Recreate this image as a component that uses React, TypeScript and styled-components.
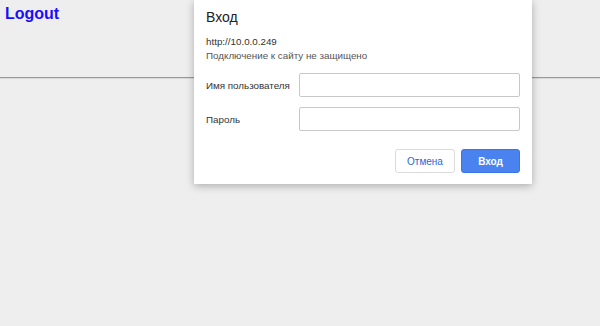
import React from 'react';
import styled, { createGlobalStyle } from 'styled-components';

const GlobalStyle = createGlobalStyle`
  html, body {
    margin: 0;
    padding: 0;
    background: #eeeeee;
    height: 100%;
  }
  #root {
    position: relative;
    min-height: 326px;
  }
`;

const Page = styled.div`
  padding: 4px 0 0 5px;
`;

const LogoutLink = styled.a`
  display: inline-block;
  font-family: 'Liberation Sans', Arial, sans-serif;
  font-weight: bold;
  font-size: 16px;
  color: #1a0dff;
  text-decoration: none;
  line-height: 20px;
`;

const Rule = styled.hr`
  margin: 53px 0 0 0;
  border: 0;
  border-top: 1px solid #9a9a9a;
  border-bottom: 1px solid #d8d8d8;
  height: 0;
`;

const Dialog = styled.div`
  position: absolute;
  top: 0;
  left: 194px;
  width: 338px;
  box-sizing: border-box;
  padding: 9px 12px 11px 12px;
  background: #ffffff;
  box-shadow: 0 2px 8px rgba(0, 0, 0, 0.28);
  font-family: 'Liberation Sans', Arial, sans-serif;
  color: #333;
`;

const Title = styled.div`
  font-size: 14px;
  line-height: 17px;
  color: #222;
`;

const Url = styled.div`
  margin-top: 9px;
  font-size: 9.8px;
  line-height: 14px;
  color: #333;
`;

const Note = styled.div`
  font-size: 9.8px;
  line-height: 14px;
  color: #555;
`;

const Fields = styled.div`
  display: flex;
  flex-direction: column;
  gap: 10px;
  margin-top: 10px;
`;

const Row = styled.label`
  display: flex;
  align-items: center;
  justify-content: space-between;
  font-size: 9.8px;
  white-space: nowrap;
  color: #333;
`;

const Input = styled.input`
  flex: 0 0 221px;
  width: 221px;
  height: 24px;
  margin: 0;
  box-sizing: border-box;
  border: 1px solid #c8c8c8;
  border-radius: 2px;
  background: #fff;
  outline: none;
`;

const Actions = styled.div`
  display: flex;
  justify-content: flex-end;
  gap: 6px;
  margin-top: 18px;
`;

const Button = styled.button<{ $primary?: boolean }>`
  height: 24px;
  padding: 0;
  width: ${p => (p.$primary ? '59px' : '60px')};
  box-sizing: border-box;
  border-radius: 3px;
  font-family: 'Liberation Sans', Arial, sans-serif;
  font-size: 10px;
  font-weight: ${p => (p.$primary ? 'bold' : 'normal')};
  color: ${p => (p.$primary ? '#ffffff' : '#2f66d8')};
  background: ${p => (p.$primary ? '#4a82f0' : '#ffffff')};
  border: 1px solid ${p => (p.$primary ? '#3b74e6' : '#dcdcdc')};
`;

export default function App() {
  return (
    <>
      <GlobalStyle />
      <Page>
        <LogoutLink href="#">Logout</LogoutLink>
      </Page>
      <Rule />
      <Dialog>
        <Title>Вход</Title>
        <Url>http://10.0.0.249</Url>
        <Note>Подключение к сайту не защищено</Note>
        <Fields>
          <Row>
            Имя пользователя
            <Input type="text" />
          </Row>
          <Row>
            Пароль
            <Input type="password" />
          </Row>
        </Fields>
        <Actions>
          <Button>Отмена</Button>
          <Button $primary>Вход</Button>
        </Actions>
      </Dialog>
    </>
  );
}
